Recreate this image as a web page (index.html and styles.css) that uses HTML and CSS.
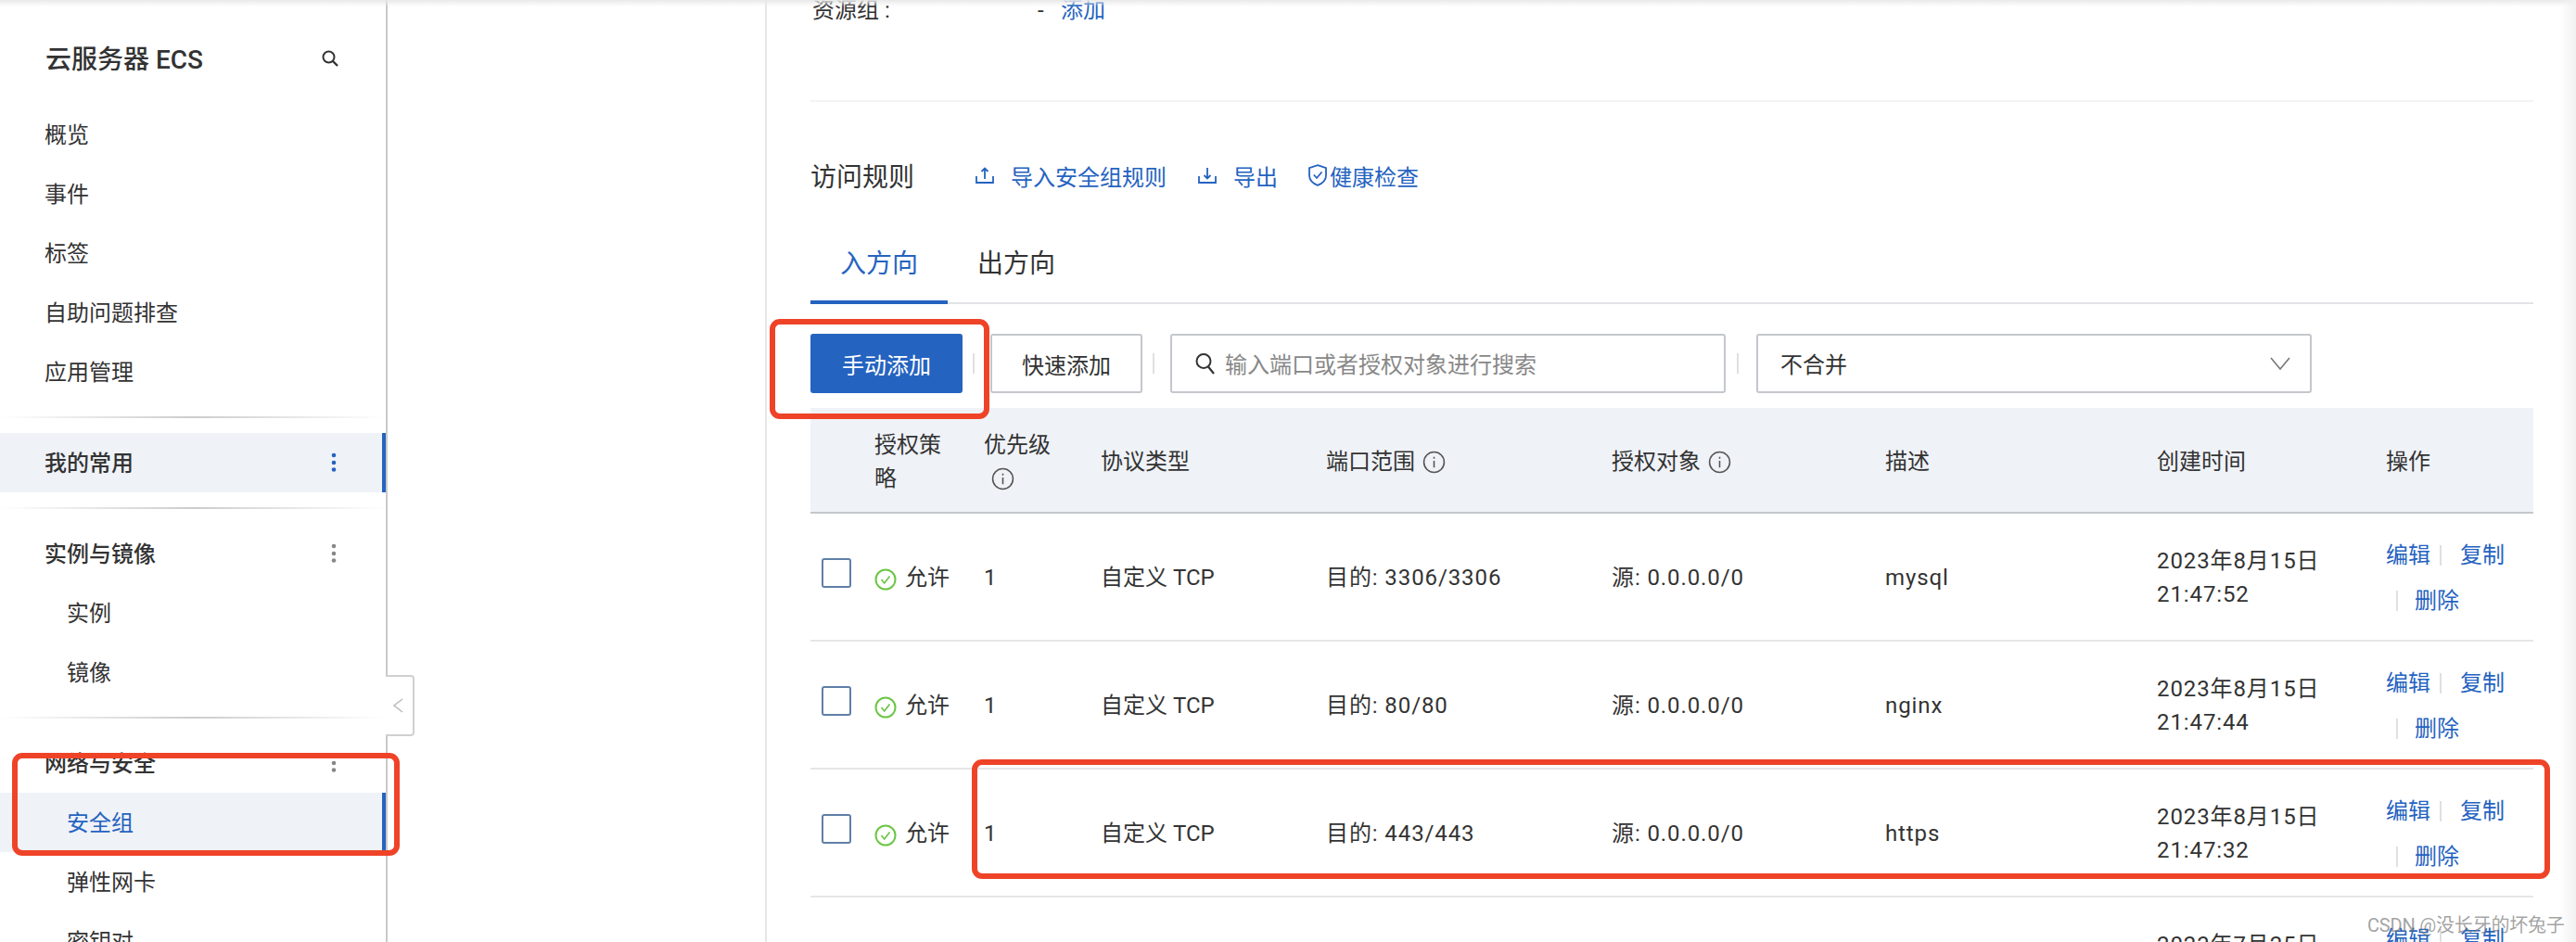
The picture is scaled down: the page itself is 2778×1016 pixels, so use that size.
FILE: index.html
```html
<!DOCTYPE html>
<html lang="zh-CN">
<head>
<meta charset="utf-8">
<title>云服务器 ECS - 安全组</title>
<link rel="stylesheet" href="styles.css">
</head>
<body>

<div class="page">

	<aside class="sidebar">
		<div class="side-title">
			<span>云服务器 ECS</span>
			<svg class="side-search" width="18" height="18" viewBox="0 0 18 18"><circle cx="7.5" cy="7.5" r="6" fill="none" stroke="#333" stroke-width="2"/><path d="M12 12l5 5" stroke="#333" stroke-width="2.4" fill="none"/></svg>
		</div>
		<ul class="nav">
			<li>概览</li>
			<li>事件</li>
			<li>标签</li>
			<li>自助问题排查</li>
			<li>应用管理</li>
		</ul>
		<div class="nav-sep"></div>
		<ul class="nav">
			<li class="nav-head active">我的常用
				<svg class="kebab" width="6" height="22" viewBox="0 0 6 22"><circle cx="3" cy="3" r="2.3" fill="#2563c0"/><circle cx="3" cy="11" r="2.3" fill="#2563c0"/><circle cx="3" cy="18.5" r="2.3" fill="#2563c0"/></svg>
			</li>
		</ul>
		<div class="nav-sep"></div>
		<ul class="nav">
			<li class="nav-head">实例与镜像
				<svg class="kebab" width="6" height="22" viewBox="0 0 6 22"><circle cx="3" cy="3" r="2.3" fill="#888"/><circle cx="3" cy="11" r="2.3" fill="#888"/><circle cx="3" cy="18.5" r="2.3" fill="#888"/></svg>
			</li>
			<li class="nav-sub">实例</li>
			<li class="nav-sub">镜像</li>
		</ul>
		<div class="nav-sep"></div>
		<ul class="nav">
			<li class="nav-head">网络与安全
				<svg class="kebab" width="6" height="22" viewBox="0 0 6 22"><circle cx="3" cy="3" r="2.3" fill="#888"/><circle cx="3" cy="11" r="2.3" fill="#888"/><circle cx="3" cy="18.5" r="2.3" fill="#888"/></svg>
			</li>
			<li class="nav-sub active current">安全组</li>
			<li class="nav-sub">弹性网卡</li>
			<li class="nav-sub">密钥对</li>
		</ul>
	</aside>

	<main class="content">
		<div class="res-row">
			<span class="res-label">资源组 :</span>
			<span class="res-dash">-</span>
			<a class="link" href="#">添加</a>
		</div>
		<div class="rule"></div>

		<div class="rules-head">
			<h2>访问规则</h2>
			<a class="link head-link first" href="#">
				<svg class="icon-tray" width="20" height="18" viewBox="0 0 20 18"><path d="M1 10v7h18v-7M10 13V1.5M6.5 5L10 1.5 13.5 5" fill="none" stroke="#2563c0" stroke-width="1.8"/></svg>
				导入安全组规则
			</a>
			<a class="link head-link" href="#">
				<svg class="icon-tray" width="20" height="18" viewBox="0 0 20 18"><path d="M1 10v7h18v-7M10 1v11.5M6.5 9L10 12.5 13.5 9" fill="none" stroke="#2563c0" stroke-width="1.8"/></svg>
				导出
			</a>
			<a class="link head-link shield" href="#">
				<svg width="22" height="24" viewBox="0 0 22 24"><path d="M11 1.2l9 3v8c0 5-4 8.600-9 10.600-5-2-9-5.600-9-10.600v-8z" fill="none" stroke="#2563c0" stroke-width="1.8"/><path d="M6.800 11.500l3.200 3.500 5.500-6.500" fill="none" stroke="#2563c0" stroke-width="1.800"/></svg>
				健康检查
			</a>
		</div>

		<div class="tabs">
			<span class="tab tab-on">入方向</span>
			<span class="tab">出方向</span>
		</div>

		<div class="toolbar">
			<button class="btn btn-primary">手动添加</button>
			<span class="tool-sep"></span>
			<button class="btn">快速添加</button>
			<span class="tool-sep"></span>
			<div class="field search">
				<svg width="22" height="24" viewBox="0 0 22 24"><circle cx="9" cy="9.500" r="7.500" fill="none" stroke="#333" stroke-width="2"/><path d="M14 15.500l6 7.500" stroke="#333" stroke-width="2.200" fill="none"/></svg>
				<span class="placeholder">输入端口或者授权对象进行搜索</span>
			</div>
			<span class="tool-sep last"></span>
			<div class="field select">
				<span class="select-text">不合并</span>
				<svg width="22" height="14" viewBox="0 0 22 14"><path d="M1 1l10 12L21 1" fill="none" stroke="#777" stroke-width="1.600"/></svg>
			</div>
		</div>

		<table class="rules">
			<colgroup>
				<col class="c-check"><col class="c-policy"><col class="c-prio"><col class="c-proto">
				<col class="c-port"><col class="c-obj"><col class="c-desc"><col class="c-time"><col class="c-op">
			</colgroup>
			<thead>
				<tr>
					<th></th>
					<th>授权策略</th>
					<th>优先级<svg class="info" width="25" height="25" viewBox="0 0 24 24"><circle cx="12" cy="12" r="10.500" fill="none" stroke="#555" stroke-width="1.500"/><path d="M12 10.500v7M12 6.500v2" stroke="#555" stroke-width="1.500"/></svg></th>
					<th>协议类型</th>
					<th>端口范围<svg class="info" width="25" height="25" viewBox="0 0 24 24"><circle cx="12" cy="12" r="10.500" fill="none" stroke="#555" stroke-width="1.500"/><path d="M12 10.500v7M12 6.500v2" stroke="#555" stroke-width="1.500"/></svg></th>
					<th>授权对象<svg class="info" width="25" height="25" viewBox="0 0 24 24"><circle cx="12" cy="12" r="10.500" fill="none" stroke="#555" stroke-width="1.500"/><path d="M12 10.500v7M12 6.500v2" stroke="#555" stroke-width="1.500"/></svg></th>
					<th>描述</th>
					<th>创建时间</th>
					<th>操作</th>
				</tr>
			</thead>
			<tbody>
				<tr>
					<td><span class="check"></span></td>
					<td><span class="allow"><svg width="24" height="24" viewBox="0 0 24 24"><circle cx="12" cy="12" r="10.500" fill="none" stroke="#6cc644" stroke-width="2"/><path d="M7.500 12l3.200 4 5.800-7.500" fill="none" stroke="#6cc644" stroke-width="1.700"/></svg>允许</span></td>
					<td>1</td>
					<td>自定义 TCP</td>
					<td class="num">目的: 3306/3306</td>
					<td class="num">源: 0.0.0.0/0</td>
					<td class="num">mysql</td>
					<td class="num">2023年8月15日<br>21:47:52</td>
					<td class="ops">
						<div class="op-line"><a class="link" href="#">编辑</a><span class="op-sep"></span><a class="link" href="#">复制</a></div>
						<div class="op-line second"><span class="op-sep"></span><a class="link" href="#">删除</a></div>
					</td>
				</tr>
				<tr>
					<td><span class="check"></span></td>
					<td><span class="allow"><svg width="24" height="24" viewBox="0 0 24 24"><circle cx="12" cy="12" r="10.500" fill="none" stroke="#6cc644" stroke-width="2"/><path d="M7.500 12l3.200 4 5.800-7.500" fill="none" stroke="#6cc644" stroke-width="1.700"/></svg>允许</span></td>
					<td>1</td>
					<td>自定义 TCP</td>
					<td class="num">目的: 80/80</td>
					<td class="num">源: 0.0.0.0/0</td>
					<td class="num">nginx</td>
					<td class="num">2023年8月15日<br>21:47:44</td>
					<td class="ops">
						<div class="op-line"><a class="link" href="#">编辑</a><span class="op-sep"></span><a class="link" href="#">复制</a></div>
						<div class="op-line second"><span class="op-sep"></span><a class="link" href="#">删除</a></div>
					</td>
				</tr>
				<tr>
					<td><span class="check"></span></td>
					<td><span class="allow"><svg width="24" height="24" viewBox="0 0 24 24"><circle cx="12" cy="12" r="10.500" fill="none" stroke="#6cc644" stroke-width="2"/><path d="M7.500 12l3.200 4 5.800-7.500" fill="none" stroke="#6cc644" stroke-width="1.700"/></svg>允许</span></td>
					<td>1</td>
					<td>自定义 TCP</td>
					<td class="num">目的: 443/443</td>
					<td class="num">源: 0.0.0.0/0</td>
					<td class="num">https</td>
					<td class="num">2023年8月15日<br>21:47:32</td>
					<td class="ops">
						<div class="op-line"><a class="link" href="#">编辑</a><span class="op-sep"></span><a class="link" href="#">复制</a></div>
						<div class="op-line second"><span class="op-sep"></span><a class="link" href="#">删除</a></div>
					</td>
				</tr>
				<tr>
					<td></td>
					<td></td>
					<td></td>
					<td></td>
					<td></td>
					<td></td>
					<td></td>
					<td class="num">2023年7月25日<br>&nbsp;</td>
					<td class="ops">
						<div class="op-line"><a class="link" href="#">编辑</a><span class="op-sep"></span><a class="link" href="#">复制</a></div>
						<div class="op-line second"><span class="op-sep"></span><a class="link" href="#">删除</a></div>
					</td>
				</tr>
			</tbody>
		</table>
	</main>

	<div class="collapse">
		<svg width="11" height="16" viewBox="0 0 11 16"><path d="M10 1L1 8l9 7" fill="none" stroke="#bbb" stroke-width="1.500"/></svg>
	</div>

	<!-- hand drawn marks on top of the screenshot -->
	<div class="mark mark-add"></div>
	<div class="mark mark-nav"></div>
	<div class="mark mark-row"></div>

	<div class="edge-top"></div>
	<div class="edge-right"></div>
	<div class="watermark">CSDN @没长牙的坏兔子</div>
</div>

</body>
</html>
```

FILE: styles.css
```css
* {
	box-sizing: border-box;
}

html, body {
	margin: 0;
	padding: 0;
	background: #fff;
}

.page {
	position: relative;
	display: flex;
	width: 2778px;
	height: 1016px;
	overflow: hidden;
	font-family: Roboto, "Noto Sans CJK SC", sans-serif;
	font-size: 24px;
	color: #333;
}

a {
	text-decoration: none;
}

.link {
	color: #2563c0;
}

/* sidebar */

.sidebar {
	flex: none;
	width: 418px;
	margin-right: 407px;
	border-right: 2px solid #c9c9c9;
}

.side-title {
	display: flex;
	align-items: center;
	justify-content: space-between;
	height: 124px;
	padding: 0 51px 0 49px;
	margin-bottom: -11px;
	font-size: 28px;
	font-weight: 500;
}

.side-search {
	margin-top: 2px;
}

.nav {
	list-style: none;
	margin: 0;
	padding: 0;
}

.nav li {
	display: flex;
	align-items: center;
	justify-content: space-between;
	height: 64px;
	padding: 2px 53px 0 48px;
	line-height: 36px;
}

.nav .nav-head {
	font-weight: 500;
}

.nav .nav-sub {
	padding-left: 72px;
}

.nav .active {
	background: #eff2f7;
	border-right: 4px solid #2563c0;
	padding-right: 49px;
}

.nav .current {
	color: #2563c0;
}

.nav .kebab {
	margin-top: -2px;
}

.nav-sep {
	height: 2px;
	margin: 16px 0;
	background: linear-gradient(to right, #fff, #ccc 50%, #fff);
}

.collapse {
	position: absolute;
	left: 416px;
	top: 728px;
	display: flex;
	align-items: center;
	justify-content: center;
	width: 31px;
	height: 66px;
	padding-right: 3px;
	background: #fff;
	border: 2px solid #d0d0d0;
	border-left: 0;
	border-radius: 0 4px 4px 0;
}

/* main column */

.content {
	flex: none;
	width: 1953px;
	padding: 0 46px 0 47px;
	border-left: 2px solid #e6e6e6;
}

.res-row {
	display: flex;
	height: 22px;
	padding-left: 2px;
	line-height: 22px;
}

.res-label {
	width: 243px;
}

.res-dash {
	width: 25px;
}

.rule {
	height: 2px;
	margin-top: 86px;
	background: #f4f4f4;
}

.rules-head {
	display: flex;
	align-items: center;
	height: 64px;
	margin-top: 47px;
}

.rules-head h2 {
	margin: 0;
	font-size: 28px;
	font-weight: 400;
}

.head-link {
	display: flex;
	align-items: center;
	margin-left: 34px;
}

.head-link.first {
	margin-left: 66px;
}

.head-link.shield {
	margin-left: 32px;
}

.icon-tray {
	margin-right: 18px;
}

.head-link.shield svg {
	margin-right: 2px;
}

.tabs {
	display: flex;
	height: 90px;
	margin-top: 17px;
	border-bottom: 2px solid #e3e4e6;
}

.tab {
	width: 148px;
	height: 90px;
	padding-top: 27px;
	font-size: 28px;
	line-height: 40px;
	text-align: center;
}

.tab-on {
	color: #2563c0;
	border-bottom: 4px solid #2563c0;
}

.toolbar {
	display: flex;
	align-items: center;
	height: 64px;
	margin-top: 32px;
}

.btn {
	width: 164px;
	height: 64px;
	padding: 0;
	font: inherit;
	color: #333;
	background: #fff;
	border: 2px solid #c4c7cc;
	border-radius: 3px;
}

.btn-primary {
	color: #fff;
	background: #2563c0;
	border-color: #2563c0;
}

.tool-sep {
	width: 2px;
	height: 22px;
	margin: 0 17px 0 11px;
	background: #e0e0e0;
}

.tool-sep.last {
	margin: 0 19px 0 12px;
}

.field {
	display: flex;
	align-items: center;
	width: 599px;
	height: 64px;
	background: #fff;
	border: 2px solid #c4c7cc;
	border-radius: 3px;
}

.search {
	padding-left: 25px;
}

.placeholder {
	margin: 0 0 2px 10px;
	color: #888;
}

.select {
	justify-content: space-between;
	padding: 0 21px 0 24px;
}

.select-text {
	margin-bottom: 2px;
}

/* table */

.rules {
	width: 1858px;
	margin-top: 16px;
	table-layout: fixed;
	border-collapse: separate;
	border-spacing: 0;
}

.c-check { width: 57px; }
.c-policy { width: 118px; }
.c-prio { width: 126px; }
.c-proto { width: 243px; }
.c-port { width: 308px; }
.c-obj { width: 295px; }
.c-desc { width: 293px; }
.c-time { width: 247px; }
.c-op { width: 171px; }

.rules th,
.rules td {
	padding: 2px 12px 0;
	line-height: 36px;
	text-align: left;
	vertical-align: middle;
}

.rules th {
	height: 114px;
	padding-top: 3px;
	font-weight: 400;
	background: #eff2f7;
	border-bottom: 2px solid #c4c7cc;
}

.rules td {
	height: 138px;
	border-bottom: 2px solid #e6e6e6;
}

.info {
	margin-left: 8px;
	vertical-align: -5px;
}

.check {
	display: block;
	width: 32px;
	height: 32px;
	margin-bottom: 10px;
	border: 2px solid #5f7fa8;
	border-radius: 3px;
}

.allow {
	display: flex;
	align-items: center;
	white-space: nowrap;
}

.allow svg {
	flex: none;
	margin: 3px 9px 0 0;
}

.num {
	letter-spacing: 0.9px;
}

.ops {
	line-height: 49px;
}

.op-line {
	display: flex;
	align-items: center;
	height: 49px;
}

.op-line.second {
	padding-left: 11px;
}

.op-sep {
	width: 2px;
	height: 22px;
	margin: 0 20px 0 10px;
	background: #e0e0e0;
}

.op-line.second .op-sep {
	margin: 0 18px 0 0;
}

/* overlays */

.mark {
	position: absolute;
	border: 6px solid #ef4328;
	border-radius: 11px;
}

.mark-add {
	left: 830px;
	top: 344px;
	width: 237px;
	height: 108px;
}

.mark-nav {
	left: 13px;
	top: 812px;
	width: 418px;
	height: 111px;
}

.mark-row {
	left: 1048px;
	top: 819px;
	width: 1702px;
	height: 129px;
}

.edge-top {
	position: absolute;
	left: 0;
	top: 0;
	width: 100%;
	height: 7px;
	background: linear-gradient(to bottom, #e9e9e9, rgba(255, 255, 255, 0));
}

.edge-right {
	position: absolute;
	right: 0;
	top: 0;
	width: 18px;
	height: 100%;
	background: linear-gradient(to right, rgba(255, 255, 255, 0), #f1f1f1);
}

.watermark {
	position: absolute;
	left: 2553px;
	top: 984px;
	font-size: 20px;
	line-height: 28px;
	letter-spacing: -0.2px;
	color: rgba(110, 110, 110, 0.65);
	white-space: nowrap;
}
```
